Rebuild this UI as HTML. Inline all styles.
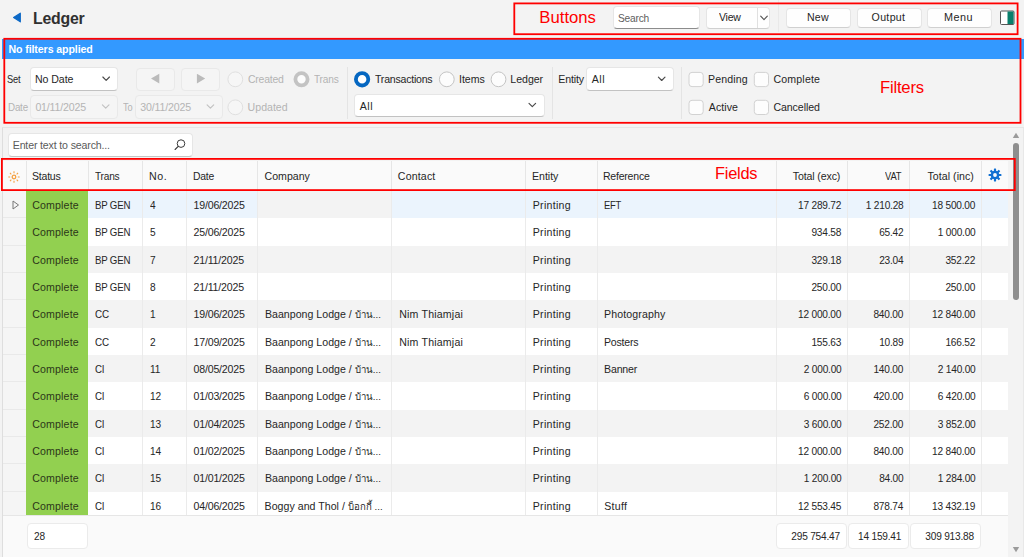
<!DOCTYPE html>
<html><head><meta charset="utf-8"><title>Ledger</title>
<style>
*{box-sizing:border-box}
html,body{margin:0;padding:0}
body{width:1024px;height:557px;background:#f3f3f3;position:relative;overflow:hidden;font-family:"Liberation Sans","Noto Sans CJK SC",sans-serif;font-size:10.6px;color:#262626}
.abs{position:absolute}
.t{position:absolute;white-space:nowrap;line-height:16px;height:16px}
.dis{color:#b4b4b4}
.box{position:absolute;background:#fff;border:1px solid #e6e6e6;border-bottom-color:#c2c2c2;border-radius:4px}
.inp{border-bottom-color:#8c8c8c}
.box.off{background:#f5f5f5;border-color:#e9e9e9}
.btn{position:absolute;background:#fefefe;border:1px solid #e5e5e5;border-bottom-color:#d0d0d0;border-radius:4px;text-align:center;line-height:20px}
.radio{position:absolute;width:16px;height:16px;border-radius:50%;background:#fafafa;border:1px solid #c9c9c9}
.radio.off{background:#f5f5f5;border-color:#e2e2e2}
.chk{position:absolute;width:16px;height:16px;border-radius:3.5px;background:#fdfdfd;border:1px solid #d4d4d4}
.vsep{position:absolute;width:1px;background:#e4e4e4}
#grid{position:absolute;left:2px;top:127px;width:1022px;height:431px;border-top:1px solid #e6e6e6;border-left:1px solid #dedede;border-right:1px solid #e8e8e8}
#gi{position:absolute;left:0;top:0;width:1020px;height:430px;overflow:hidden}
.hrow{position:absolute;left:0;top:33px;width:1005px;height:30px;background:#fafafa}
.h{position:absolute;top:0;height:30px;line-height:30.6px;padding:0 6.3px;border-left:1px solid #e6e6e6;white-space:nowrap}
.h.exc,.h.vat,.h.inc{text-align:right;padding-right:6.6px}
.h.ind{border-left:none}
.row{position:absolute;left:0;width:1005px;height:27.33px;background:#fff}
.row.alt{background:#f3f3f3}
.row.foc{background:#ebf4fd}
.c{position:absolute;top:0;height:27.33px;line-height:29.4px;padding:0 6.5px;border-left:1px solid #ebebeb;white-space:nowrap;overflow:hidden}
.c.ind{background:#f5f5f5;border-left:none;border-bottom:1px solid #e9e9e9}
.c.status{background:#92d050;color:#2c3619;border-left:none}
.c.trans{border-left:none}
.c.exc,.c.vat,.c.inc{text-align:right;padding-right:5.6px}
.c.fc{background:#f3f3f3}
.th{font-size:9.6px}
.foot{position:absolute;left:0;top:387px;width:1005px;height:43px;background:#fafafa;border-top:1px solid #e6e6e6}
.fb{position:absolute;top:7px;height:26px;background:#fff;border:1px solid #ebebeb;border-radius:4px;line-height:24px;padding:0 5.6px;white-space:nowrap}
.fb.r{text-align:right;padding-right:6.5px}
</style></head>
<body>
<!-- header -->
<svg class="abs" style="left:12.4px;top:10.5px" width="10" height="13" viewBox="0 0 10 13"><path d="M8.3 2.2 L1.6 6.4 L8.3 10.8 Z" fill="#0d69c6" stroke="#0d69c6" stroke-width="1.2" stroke-linejoin="round"/></svg>
<div class="t" id="m0" style="left:33.35px;top:8.99px;letter-spacing:-0.220px;line-height:20px;height:20px;transform:scaleX(1.0156);transform-origin:0 50%;font-size:15.6px;font-weight:bold;color:#303030">Ledger</div>

<div class="box inp" style="left:613px;top:6px;width:87px;height:23px"></div>
<div class="t" id="m1" style="left:618.04px;top:10.13px;letter-spacing:-0.220px;line-height:16px;height:16px;transform:scaleX(0.9622);transform-origin:0 50%;color:#5e5e5e">Search</div>
<div class="btn" style="left:706px;top:7px;width:64px;height:22px"></div>
<div class="t" id="m2" style="left:718.63px;top:9.03px;letter-spacing:-0.220px;line-height:16px;height:16px;transform:scaleX(0.9936);transform-origin:0 50%">View</div>
<div class="vsep" style="left:757px;top:8px;height:20px;background:#e0e0e0"></div>
<div class="vsep" style="left:778px;top:0px;height:32px;background:#e9e9e9"></div>
<div class="btn" style="left:786px;top:8px;width:65px;height:20px"></div><div class="t" id="m3" style="left:807.01px;top:9.13px;letter-spacing:0.207px;line-height:16px;height:16px">New</div>
<div class="btn" style="left:857px;top:8px;width:65px;height:20px"></div><div class="t" id="m4" style="left:871.57px;top:9.13px;letter-spacing:0.335px;line-height:16px;height:16px">Output</div>
<div class="btn" style="left:927px;top:8px;width:65px;height:20px"></div><div class="t" id="m5" style="left:944.49px;top:9.13px;letter-spacing:0.500px;line-height:16px;height:16px;transform:scaleX(1.0216);transform-origin:0 50%">Menu</div>
<svg class="abs" style="left:999px;top:10px" width="17" height="16" viewBox="0 0 17 16"><rect x="1.5" y="1" width="13.5" height="13.5" rx="1" fill="#fff" stroke="#555" stroke-width="1"/><rect x="8.5" y="1.5" width="6" height="12.5" fill="#087f6c"/></svg>

<!-- filter bar -->
<div class="abs" style="left:2px;top:39px;width:1022px;height:20px;background:#3399ff"></div>
<div class="t" id="m6" style="left:8.44px;top:40.93px;letter-spacing:-0.091px;line-height:16px;height:16px;font-weight:bold;color:#fff">No filters applied</div>

<div class="t" id="m7" style="left:7.39px;top:71.33px;letter-spacing:-0.220px;line-height:16px;height:16px;transform:scaleX(0.8778);transform-origin:0 50%">Set</div>
<div class="box" style="left:30px;top:67px;width:88px;height:24px"></div>
<div class="t" id="m8" style="left:34.97px;top:71.33px;letter-spacing:-0.066px;line-height:16px;height:16px">No Date</div>

<div class="box off" style="left:136px;top:68px;width:39px;height:23px"></div>

<div class="box off" style="left:181px;top:68px;width:39px;height:23px"></div>


<div class="t dis" id="m9" style="left:247.53px;top:71.33px;letter-spacing:-0.220px;line-height:16px;height:16px;transform:scaleX(0.9878);transform-origin:0 50%">Created</div>
<div class="t dis" id="m10" style="left:314.29px;top:71.33px;letter-spacing:-0.220px;line-height:16px;height:16px;transform:scaleX(0.9573);transform-origin:0 50%">Trans</div>
<div class="t dis" id="m11" style="left:247.61px;top:99.33px;letter-spacing:-0.002px;line-height:16px;height:16px">Updated</div>

<div class="t dis" id="m12" style="left:7.62px;top:99.33px;letter-spacing:-0.220px;line-height:16px;height:16px;transform:scaleX(0.9253);transform-origin:0 50%">Date</div>
<div class="box off" style="left:30px;top:95px;width:88px;height:24px"></div>
<div class="t dis" id="m13" style="left:35.42px;top:99.33px;letter-spacing:-0.180px;line-height:16px;height:16px">01/11/2025</div>
<div class="t dis" id="m14" style="left:122.69px;top:99.33px;letter-spacing:-0.220px;line-height:16px;height:16px;transform:scaleX(0.8665);transform-origin:0 50%">To</div>
<div class="box off" style="left:135px;top:95px;width:88px;height:24px"></div>
<div class="t dis" id="m15" style="left:140.16px;top:99.33px;letter-spacing:-0.133px;line-height:16px;height:16px">30/11/2025</div>

<div class="vsep" style="left:347px;top:67px;height:52px"></div>
<div class="t" id="m16" style="left:374.85px;top:71.33px;letter-spacing:-0.220px;line-height:16px;height:16px;transform:scaleX(0.9959);transform-origin:0 50%">Transactions</div>
<div class="t" id="m17" style="left:459.02px;top:71.33px;letter-spacing:-0.050px;line-height:16px;height:16px">Items</div>
<div class="t" id="m18" style="left:510.36px;top:71.33px;letter-spacing:-0.045px;line-height:16px;height:16px">Ledger</div>
<div class="box" style="left:354px;top:94px;width:191px;height:23px"></div>
<div class="t" id="m19" style="left:359.81px;top:97.93px;letter-spacing:0.500px;line-height:16px;height:16px">All</div>

<div class="vsep" style="left:552px;top:67px;height:52px"></div>
<div class="t" id="m20" style="left:558.33px;top:71.33px;letter-spacing:-0.156px;line-height:16px;height:16px">Entity</div>
<div class="box" style="left:586px;top:67px;width:88px;height:24px"></div>
<div class="t" id="m21" style="left:591.80px;top:71.33px;letter-spacing:0.500px;line-height:16px;height:16px">All</div>

<div class="vsep" style="left:681px;top:67px;height:52px"></div>
<div class="t" id="m22" style="left:708.09px;top:71.33px;letter-spacing:0.110px;line-height:16px;height:16px">Pending</div>
<div class="t" id="m23" style="left:773.40px;top:71.33px;letter-spacing:0.179px;line-height:16px;height:16px">Complete</div>
<div class="t" id="m24" style="left:708.80px;top:99.33px;letter-spacing:0.064px;line-height:16px;height:16px">Active</div>
<div class="t" id="m25" style="left:773.38px;top:99.33px;letter-spacing:-0.062px;line-height:16px;height:16px">Cancelled</div>

<svg class="abs" style="left:0;top:0" width="1024" height="557" viewBox="0 0 1024 557">
<g fill="none" stroke-linecap="round" stroke-linejoin="round">
<path d="M760.70 16.20 L764.00 19.60 L767.30 16.20" stroke="#555" stroke-width="1.15"/>
<path d="M102.85 77.00 L106.15 80.40 L109.45 77.00" stroke="#4a4a4a" stroke-width="1.15"/>
<path d="M658.40 77.10 L661.70 80.50 L665.00 77.10" stroke="#4a4a4a" stroke-width="1.15"/>
<path d="M529.00 103.30 L532.30 106.70 L535.60 103.30" stroke="#4a4a4a" stroke-width="1.15"/>
<path d="M102.40 104.80 L105.70 108.20 L109.00 104.80" stroke="#c2c2c2" stroke-width="1.15"/>
<path d="M207.10 104.80 L210.40 108.20 L213.70 104.80" stroke="#c2c2c2" stroke-width="1.15"/>
</g>
<g>
<circle cx="235.3" cy="79.3" r="7.4" fill="#f6f6f6" stroke="#e0e0e0" stroke-width="1"/>
<circle cx="235.3" cy="107.3" r="7.4" fill="#f6f6f6" stroke="#e0e0e0" stroke-width="1"/>
<circle cx="301.5" cy="79.3" r="6.1" fill="#fcfcfc" stroke="#c3c3c3" stroke-width="3.8"/>
<circle cx="362.1" cy="79.3" r="6.2" fill="#ffffff" stroke="#0567c1" stroke-width="3.8"/>
<circle cx="446.8" cy="79.3" r="7.4" fill="#fcfcfc" stroke="#c4c4c4" stroke-width="1"/>
<circle cx="498.5" cy="79.3" r="7.4" fill="#fcfcfc" stroke="#c4c4c4" stroke-width="1"/>
</g>
<path d="M159.3 73.8 L151 78.6 L159.3 83.4 Z M196.9 73.8 L205.2 78.6 L196.9 83.4 Z" fill="#bbbbbb"/>
<g fill="#fdfdfd" stroke="#d2d2d2" stroke-width="1">
<rect x="689" y="72.4" width="14.2" height="14.2" rx="3"/>
<rect x="754.3" y="72.4" width="14.2" height="14.2" rx="3"/>
<rect x="689" y="100.3" width="14.2" height="14.2" rx="3"/>
<rect x="754.3" y="100.3" width="14.2" height="14.2" rx="3"/>
</g>
</svg>
<!-- grid -->
<div id="grid"><div id="gi">
  <div class="box inp" style="left:5px;top:5px;width:185px;height:24px;border-bottom-color:#c4c4c4"></div>
  <div class="t" id="m26" style="left:9.73px;top:8.93px;letter-spacing:-0.152px;line-height:16px;height:16px;color:#5a5a5a">Enter text to search...</div>
  <svg class="abs" style="left:170.4px;top:10px" width="14" height="14" viewBox="0 0 14 14"><circle cx="8" cy="5.6" r="3.8" fill="none" stroke="#3a3a3a" stroke-width="1"/><path d="M5.2 8.4 L2.1 11.5" stroke="#3a3a3a" stroke-width="1.1" stroke-linecap="round"/></svg>
  <div class="hrow"><div class="h ind" style="left:0px;width:23px"><svg width="14" height="14" viewBox="0 0 14 14" style="position:absolute;left:4.4px;top:8.7px"><g stroke="#f4a040" fill="none" stroke-linecap="butt"><circle cx="7" cy="7" r="1.8" stroke-width="1.3"/><path stroke-width="1.1" d="M7 1.3v1.9M7 10.8v1.9M1.3 7h1.9M10.8 7h1.9M2.97 2.97l1.35 1.35M9.68 9.68l1.35 1.35M2.97 11.03l1.35-1.35M9.68 4.32l1.35-1.35"/></g></svg></div><div class="h status" style="left:23px;width:62px"><span id="c111" style="letter-spacing:-0.220px;position:relative;left:-1.17px;display:inline-block;transform:scaleX(0.9938);transform-origin:0 50%">Status</span></div><div class="h trans" style="left:85px;width:54px"><span id="c112" style="letter-spacing:-0.220px;position:relative;left:-0.10px;display:inline-block;transform:scaleX(0.9550);transform-origin:0 50%">Trans</span></div><div class="h no" style="left:139px;width:44px"><span id="c113" style="letter-spacing:0.500px;position:relative;left:-0.76px;display:inline-block;transform:scaleX(1.0066);transform-origin:0 50%">No.</span></div><div class="h date" style="left:183px;width:71px"><span id="c114" style="letter-spacing:-0.220px;position:relative;left:-0.52px;display:inline-block;transform:scaleX(0.9794);transform-origin:0 50%">Date</span></div><div class="h company" style="left:254px;width:134px"><span id="c115" style="letter-spacing:0.006px;position:relative;left:0.22px">Company</span></div><div class="h contact" style="left:388px;width:134px"><span id="c116" style="letter-spacing:0.157px;position:relative;left:-0.44px">Contact</span></div><div class="h entity" style="left:522px;width:72px"><span id="c117" style="letter-spacing:-0.018px;position:relative;left:-0.30px">Entity</span></div><div class="h ref" style="left:594px;width:179px"><span id="c118" style="letter-spacing:-0.220px;position:relative;left:-0.88px;display:inline-block;transform:scaleX(0.9925);transform-origin:0 50%">Reference</span></div><div class="h exc" style="left:773px;width:71px"><span id="c119" style="letter-spacing:-0.137px;position:relative;left:-0.21px">Total (exc)</span></div><div class="h vat" style="left:844px;width:62px"><span id="c120" style="letter-spacing:-0.220px;position:relative;left:-0.61px;display:inline-block;transform:scaleX(0.8849);transform-origin:100% 50%">VAT</span></div><div class="h inc" style="left:906px;width:72px"><span id="c121" style="letter-spacing:0.051px;position:relative;left:-0.50px">Total (inc)</span></div><div class="h gear" style="left:978px;width:27px"><svg width="14" height="14" viewBox="0 0 14 14" style="position:absolute;left:5.8px;top:7.4px"><g fill="#1170d2"><circle cx="7" cy="7" r="4.3"/><g><rect x="5.9" y="0.6" width="2.2" height="12.8" rx="0.4"/><rect x="5.9" y="0.6" width="2.2" height="12.8" rx="0.4" transform="rotate(45 7 7)"/><rect x="5.9" y="0.6" width="2.2" height="12.8" rx="0.4" transform="rotate(90 7 7)"/><rect x="5.9" y="0.6" width="2.2" height="12.8" rx="0.4" transform="rotate(135 7 7)"/></g></g><circle cx="7" cy="7" r="1.9" fill="#fafafa"/></svg></div></div>
<div class="row foc" style="top:63.00px"><div class="c ind" style="left:0px;width:23px"><svg width="8" height="10" viewBox="0 0 8 10" style="position:absolute;left:9px;top:8.5px"><path d="M1 1 L6.5 5 L1 9 Z" fill="none" stroke="#777" stroke-width="1"/></svg></div><div class="c status" style="left:23px;width:62px"><span id="c1" style="letter-spacing:0.156px;position:relative;left:-0.30px">Complete</span></div><div class="c trans" style="left:85px;width:54px"><span id="c2" style="letter-spacing:-0.220px;position:relative;left:0.99px;display:inline-block;transform:scaleX(0.9130);transform-origin:0 50%">BP GEN</span></div><div class="c no" style="left:139px;width:44px"><span id="c3" style="letter-spacing:-0.220px;display:inline-block;transform:scaleX(0.9537);transform-origin:0 50%">4</span></div><div class="c date" style="left:183px;width:71px"><span id="c4" style="letter-spacing:-0.183px">19/06/2025</span></div><div class="c company fc" style="left:254px;width:134px"></div><div class="c contact" style="left:388px;width:134px"></div><div class="c entity" style="left:522px;width:72px"><span id="c5" style="letter-spacing:0.285px;position:relative;left:0.22px">Printing</span></div><div class="c ref" style="left:594px;width:179px"><span id="c6" style="letter-spacing:-0.220px;position:relative;left:-0.54px;display:inline-block;transform:scaleX(0.8873);transform-origin:0 50%">EFT</span></div><div class="c exc" style="left:773px;width:71px"><span id="c7" style="letter-spacing:-0.220px;display:inline-block;transform:scaleX(0.9537);transform-origin:100% 50%">17 289.72</span></div><div class="c vat" style="left:844px;width:62px"><span id="c8" style="letter-spacing:-0.220px;display:inline-block;transform:scaleX(0.9537);transform-origin:100% 50%">1 210.28</span></div><div class="c inc" style="left:906px;width:72px"><span id="c9" style="letter-spacing:-0.220px;display:inline-block;transform:scaleX(0.9537);transform-origin:100% 50%">18 500.00</span></div><div class="c gear" style="left:978px;width:27px"></div></div>
<div class="row" style="top:90.33px"><div class="c ind" style="left:0px;width:23px"></div><div class="c status" style="left:23px;width:62px"><span id="c10" style="letter-spacing:0.156px;position:relative;left:-0.30px">Complete</span></div><div class="c trans" style="left:85px;width:54px"><span id="c11" style="letter-spacing:-0.220px;position:relative;left:0.99px;display:inline-block;transform:scaleX(0.9130);transform-origin:0 50%">BP GEN</span></div><div class="c no" style="left:139px;width:44px"><span id="c12" style="letter-spacing:-0.220px;display:inline-block;transform:scaleX(0.9537);transform-origin:0 50%">5</span></div><div class="c date" style="left:183px;width:71px"><span id="c13" style="letter-spacing:-0.183px">25/06/2025</span></div><div class="c company" style="left:254px;width:134px"></div><div class="c contact" style="left:388px;width:134px"></div><div class="c entity" style="left:522px;width:72px"><span id="c14" style="letter-spacing:0.285px;position:relative;left:0.22px">Printing</span></div><div class="c ref" style="left:594px;width:179px"></div><div class="c exc" style="left:773px;width:71px"><span id="c15" style="letter-spacing:-0.220px;display:inline-block;transform:scaleX(0.9537);transform-origin:100% 50%">934.58</span></div><div class="c vat" style="left:844px;width:62px"><span id="c16" style="letter-spacing:-0.220px;display:inline-block;transform:scaleX(0.9537);transform-origin:100% 50%">65.42</span></div><div class="c inc" style="left:906px;width:72px"><span id="c17" style="letter-spacing:-0.220px;display:inline-block;transform:scaleX(0.9537);transform-origin:100% 50%">1 000.00</span></div><div class="c gear" style="left:978px;width:27px"></div></div>
<div class="row alt" style="top:117.66px"><div class="c ind" style="left:0px;width:23px"></div><div class="c status" style="left:23px;width:62px"><span id="c18" style="letter-spacing:0.156px;position:relative;left:-0.30px">Complete</span></div><div class="c trans" style="left:85px;width:54px"><span id="c19" style="letter-spacing:-0.220px;position:relative;left:0.99px;display:inline-block;transform:scaleX(0.9130);transform-origin:0 50%">BP GEN</span></div><div class="c no" style="left:139px;width:44px"><span id="c20" style="letter-spacing:-0.220px;display:inline-block;transform:scaleX(0.9537);transform-origin:0 50%">7</span></div><div class="c date" style="left:183px;width:71px"><span id="c21" style="letter-spacing:-0.183px">21/11/2025</span></div><div class="c company" style="left:254px;width:134px"></div><div class="c contact" style="left:388px;width:134px"></div><div class="c entity" style="left:522px;width:72px"><span id="c22" style="letter-spacing:0.285px;position:relative;left:0.22px">Printing</span></div><div class="c ref" style="left:594px;width:179px"></div><div class="c exc" style="left:773px;width:71px"><span id="c23" style="letter-spacing:-0.220px;display:inline-block;transform:scaleX(0.9537);transform-origin:100% 50%">329.18</span></div><div class="c vat" style="left:844px;width:62px"><span id="c24" style="letter-spacing:-0.220px;display:inline-block;transform:scaleX(0.9537);transform-origin:100% 50%">23.04</span></div><div class="c inc" style="left:906px;width:72px"><span id="c25" style="letter-spacing:-0.220px;display:inline-block;transform:scaleX(0.9537);transform-origin:100% 50%">352.22</span></div><div class="c gear" style="left:978px;width:27px"></div></div>
<div class="row" style="top:144.99px"><div class="c ind" style="left:0px;width:23px"></div><div class="c status" style="left:23px;width:62px"><span id="c26" style="letter-spacing:0.156px;position:relative;left:-0.30px">Complete</span></div><div class="c trans" style="left:85px;width:54px"><span id="c27" style="letter-spacing:-0.220px;position:relative;left:0.99px;display:inline-block;transform:scaleX(0.9130);transform-origin:0 50%">BP GEN</span></div><div class="c no" style="left:139px;width:44px"><span id="c28" style="letter-spacing:-0.220px;display:inline-block;transform:scaleX(0.9537);transform-origin:0 50%">8</span></div><div class="c date" style="left:183px;width:71px"><span id="c29" style="letter-spacing:-0.183px">21/11/2025</span></div><div class="c company" style="left:254px;width:134px"></div><div class="c contact" style="left:388px;width:134px"></div><div class="c entity" style="left:522px;width:72px"><span id="c30" style="letter-spacing:0.285px;position:relative;left:0.22px">Printing</span></div><div class="c ref" style="left:594px;width:179px"></div><div class="c exc" style="left:773px;width:71px"><span id="c31" style="letter-spacing:-0.220px;display:inline-block;transform:scaleX(0.9537);transform-origin:100% 50%">250.00</span></div><div class="c vat" style="left:844px;width:62px"></div><div class="c inc" style="left:906px;width:72px"><span id="c32" style="letter-spacing:-0.220px;display:inline-block;transform:scaleX(0.9537);transform-origin:100% 50%">250.00</span></div><div class="c gear" style="left:978px;width:27px"></div></div>
<div class="row alt" style="top:172.32px"><div class="c ind" style="left:0px;width:23px"></div><div class="c status" style="left:23px;width:62px"><span id="c33" style="letter-spacing:0.156px;position:relative;left:-0.30px">Complete</span></div><div class="c trans" style="left:85px;width:54px"><span id="c34" style="letter-spacing:-0.220px;position:relative;left:0.68px;display:inline-block;transform:scaleX(0.9298);transform-origin:0 50%">CC</span></div><div class="c no" style="left:139px;width:44px"><span id="c35" style="letter-spacing:-0.220px;display:inline-block;transform:scaleX(0.9537);transform-origin:0 50%">1</span></div><div class="c date" style="left:183px;width:71px"><span id="c36" style="letter-spacing:-0.183px">19/06/2025</span></div><div class="c company" style="left:254px;width:134px"><span id="c37" style="letter-spacing:0.021px;position:relative;left:0.42px">Baanpong Lodge / </span><span class="th" style="position:relative;left:0.42px">บ้าน...</span></div><div class="c contact" style="left:388px;width:134px"><span id="c38" style="letter-spacing:0.185px;position:relative;left:0.69px">Nim Thiamjai</span></div><div class="c entity" style="left:522px;width:72px"><span id="c39" style="letter-spacing:0.285px;position:relative;left:0.22px">Printing</span></div><div class="c ref" style="left:594px;width:179px"><span id="c40" style="letter-spacing:0.107px;position:relative;left:-0.40px">Photography</span></div><div class="c exc" style="left:773px;width:71px"><span id="c41" style="letter-spacing:-0.220px;display:inline-block;transform:scaleX(0.9537);transform-origin:100% 50%">12 000.00</span></div><div class="c vat" style="left:844px;width:62px"><span id="c42" style="letter-spacing:-0.220px;display:inline-block;transform:scaleX(0.9537);transform-origin:100% 50%">840.00</span></div><div class="c inc" style="left:906px;width:72px"><span id="c43" style="letter-spacing:-0.220px;display:inline-block;transform:scaleX(0.9537);transform-origin:100% 50%">12 840.00</span></div><div class="c gear" style="left:978px;width:27px"></div></div>
<div class="row" style="top:199.65px"><div class="c ind" style="left:0px;width:23px"></div><div class="c status" style="left:23px;width:62px"><span id="c44" style="letter-spacing:0.156px;position:relative;left:-0.30px">Complete</span></div><div class="c trans" style="left:85px;width:54px"><span id="c45" style="letter-spacing:-0.220px;position:relative;left:0.68px;display:inline-block;transform:scaleX(0.9298);transform-origin:0 50%">CC</span></div><div class="c no" style="left:139px;width:44px"><span id="c46" style="letter-spacing:-0.220px;display:inline-block;transform:scaleX(0.9537);transform-origin:0 50%">2</span></div><div class="c date" style="left:183px;width:71px"><span id="c47" style="letter-spacing:-0.183px">17/09/2025</span></div><div class="c company" style="left:254px;width:134px"><span id="c48" style="letter-spacing:0.021px;position:relative;left:0.42px">Baanpong Lodge / </span><span class="th" style="position:relative;left:0.42px">บ้าน...</span></div><div class="c contact" style="left:388px;width:134px"><span id="c49" style="letter-spacing:0.185px;position:relative;left:0.69px">Nim Thiamjai</span></div><div class="c entity" style="left:522px;width:72px"><span id="c50" style="letter-spacing:0.285px;position:relative;left:0.22px">Printing</span></div><div class="c ref" style="left:594px;width:179px"><span id="c51" style="letter-spacing:-0.220px;position:relative;left:-0.60px;display:inline-block;transform:scaleX(0.9970);transform-origin:0 50%">Posters</span></div><div class="c exc" style="left:773px;width:71px"><span id="c52" style="letter-spacing:-0.220px;display:inline-block;transform:scaleX(0.9537);transform-origin:100% 50%">155.63</span></div><div class="c vat" style="left:844px;width:62px"><span id="c53" style="letter-spacing:-0.220px;display:inline-block;transform:scaleX(0.9537);transform-origin:100% 50%">10.89</span></div><div class="c inc" style="left:906px;width:72px"><span id="c54" style="letter-spacing:-0.220px;display:inline-block;transform:scaleX(0.9537);transform-origin:100% 50%">166.52</span></div><div class="c gear" style="left:978px;width:27px"></div></div>
<div class="row alt" style="top:226.98px"><div class="c ind" style="left:0px;width:23px"></div><div class="c status" style="left:23px;width:62px"><span id="c55" style="letter-spacing:0.156px;position:relative;left:-0.30px">Complete</span></div><div class="c trans" style="left:85px;width:54px"><span id="c56" style="letter-spacing:-0.220px;position:relative;left:0.52px;display:inline-block;transform:scaleX(0.9201);transform-origin:0 50%">CI</span></div><div class="c no" style="left:139px;width:44px"><span id="c57" style="letter-spacing:-0.220px;display:inline-block;transform:scaleX(0.9537);transform-origin:0 50%">11</span></div><div class="c date" style="left:183px;width:71px"><span id="c58" style="letter-spacing:-0.183px">08/05/2025</span></div><div class="c company" style="left:254px;width:134px"><span id="c59" style="letter-spacing:0.021px;position:relative;left:0.42px">Baanpong Lodge / </span><span class="th" style="position:relative;left:0.42px">บ้าน...</span></div><div class="c contact" style="left:388px;width:134px"></div><div class="c entity" style="left:522px;width:72px"><span id="c60" style="letter-spacing:0.285px;position:relative;left:0.22px">Printing</span></div><div class="c ref" style="left:594px;width:179px"><span id="c61" style="letter-spacing:-0.213px;position:relative;left:-0.40px">Banner</span></div><div class="c exc" style="left:773px;width:71px"><span id="c62" style="letter-spacing:-0.220px;display:inline-block;transform:scaleX(0.9537);transform-origin:100% 50%">2 000.00</span></div><div class="c vat" style="left:844px;width:62px"><span id="c63" style="letter-spacing:-0.220px;display:inline-block;transform:scaleX(0.9537);transform-origin:100% 50%">140.00</span></div><div class="c inc" style="left:906px;width:72px"><span id="c64" style="letter-spacing:-0.220px;display:inline-block;transform:scaleX(0.9537);transform-origin:100% 50%">2 140.00</span></div><div class="c gear" style="left:978px;width:27px"></div></div>
<div class="row" style="top:254.31px"><div class="c ind" style="left:0px;width:23px"></div><div class="c status" style="left:23px;width:62px"><span id="c65" style="letter-spacing:0.156px;position:relative;left:-0.30px">Complete</span></div><div class="c trans" style="left:85px;width:54px"><span id="c66" style="letter-spacing:-0.220px;position:relative;left:0.52px;display:inline-block;transform:scaleX(0.9201);transform-origin:0 50%">CI</span></div><div class="c no" style="left:139px;width:44px"><span id="c67" style="letter-spacing:-0.220px;display:inline-block;transform:scaleX(0.9537);transform-origin:0 50%">12</span></div><div class="c date" style="left:183px;width:71px"><span id="c68" style="letter-spacing:-0.183px">01/03/2025</span></div><div class="c company" style="left:254px;width:134px"><span id="c69" style="letter-spacing:0.021px;position:relative;left:0.42px">Baanpong Lodge / </span><span class="th" style="position:relative;left:0.42px">บ้าน...</span></div><div class="c contact" style="left:388px;width:134px"></div><div class="c entity" style="left:522px;width:72px"><span id="c70" style="letter-spacing:0.285px;position:relative;left:0.22px">Printing</span></div><div class="c ref" style="left:594px;width:179px"></div><div class="c exc" style="left:773px;width:71px"><span id="c71" style="letter-spacing:-0.220px;display:inline-block;transform:scaleX(0.9537);transform-origin:100% 50%">6 000.00</span></div><div class="c vat" style="left:844px;width:62px"><span id="c72" style="letter-spacing:-0.220px;display:inline-block;transform:scaleX(0.9537);transform-origin:100% 50%">420.00</span></div><div class="c inc" style="left:906px;width:72px"><span id="c73" style="letter-spacing:-0.220px;display:inline-block;transform:scaleX(0.9537);transform-origin:100% 50%">6 420.00</span></div><div class="c gear" style="left:978px;width:27px"></div></div>
<div class="row alt" style="top:281.64px"><div class="c ind" style="left:0px;width:23px"></div><div class="c status" style="left:23px;width:62px"><span id="c74" style="letter-spacing:0.156px;position:relative;left:-0.30px">Complete</span></div><div class="c trans" style="left:85px;width:54px"><span id="c75" style="letter-spacing:-0.220px;position:relative;left:0.52px;display:inline-block;transform:scaleX(0.9201);transform-origin:0 50%">CI</span></div><div class="c no" style="left:139px;width:44px"><span id="c76" style="letter-spacing:-0.220px;display:inline-block;transform:scaleX(0.9537);transform-origin:0 50%">13</span></div><div class="c date" style="left:183px;width:71px"><span id="c77" style="letter-spacing:-0.183px">01/04/2025</span></div><div class="c company" style="left:254px;width:134px"><span id="c78" style="letter-spacing:0.021px;position:relative;left:0.42px">Baanpong Lodge / </span><span class="th" style="position:relative;left:0.42px">บ้าน...</span></div><div class="c contact" style="left:388px;width:134px"></div><div class="c entity" style="left:522px;width:72px"><span id="c79" style="letter-spacing:0.285px;position:relative;left:0.22px">Printing</span></div><div class="c ref" style="left:594px;width:179px"></div><div class="c exc" style="left:773px;width:71px"><span id="c80" style="letter-spacing:-0.220px;display:inline-block;transform:scaleX(0.9537);transform-origin:100% 50%">3 600.00</span></div><div class="c vat" style="left:844px;width:62px"><span id="c81" style="letter-spacing:-0.220px;display:inline-block;transform:scaleX(0.9537);transform-origin:100% 50%">252.00</span></div><div class="c inc" style="left:906px;width:72px"><span id="c82" style="letter-spacing:-0.220px;display:inline-block;transform:scaleX(0.9537);transform-origin:100% 50%">3 852.00</span></div><div class="c gear" style="left:978px;width:27px"></div></div>
<div class="row" style="top:308.97px"><div class="c ind" style="left:0px;width:23px"></div><div class="c status" style="left:23px;width:62px"><span id="c83" style="letter-spacing:0.156px;position:relative;left:-0.30px">Complete</span></div><div class="c trans" style="left:85px;width:54px"><span id="c84" style="letter-spacing:-0.220px;position:relative;left:0.52px;display:inline-block;transform:scaleX(0.9201);transform-origin:0 50%">CI</span></div><div class="c no" style="left:139px;width:44px"><span id="c85" style="letter-spacing:-0.220px;display:inline-block;transform:scaleX(0.9537);transform-origin:0 50%">14</span></div><div class="c date" style="left:183px;width:71px"><span id="c86" style="letter-spacing:-0.183px">01/02/2025</span></div><div class="c company" style="left:254px;width:134px"><span id="c87" style="letter-spacing:0.021px;position:relative;left:0.42px">Baanpong Lodge / </span><span class="th" style="position:relative;left:0.42px">บ้าน...</span></div><div class="c contact" style="left:388px;width:134px"></div><div class="c entity" style="left:522px;width:72px"><span id="c88" style="letter-spacing:0.285px;position:relative;left:0.22px">Printing</span></div><div class="c ref" style="left:594px;width:179px"></div><div class="c exc" style="left:773px;width:71px"><span id="c89" style="letter-spacing:-0.220px;display:inline-block;transform:scaleX(0.9537);transform-origin:100% 50%">12 000.00</span></div><div class="c vat" style="left:844px;width:62px"><span id="c90" style="letter-spacing:-0.220px;display:inline-block;transform:scaleX(0.9537);transform-origin:100% 50%">840.00</span></div><div class="c inc" style="left:906px;width:72px"><span id="c91" style="letter-spacing:-0.220px;display:inline-block;transform:scaleX(0.9537);transform-origin:100% 50%">12 840.00</span></div><div class="c gear" style="left:978px;width:27px"></div></div>
<div class="row alt" style="top:336.30px"><div class="c ind" style="left:0px;width:23px"></div><div class="c status" style="left:23px;width:62px"><span id="c92" style="letter-spacing:0.156px;position:relative;left:-0.30px">Complete</span></div><div class="c trans" style="left:85px;width:54px"><span id="c93" style="letter-spacing:-0.220px;position:relative;left:0.52px;display:inline-block;transform:scaleX(0.9201);transform-origin:0 50%">CI</span></div><div class="c no" style="left:139px;width:44px"><span id="c94" style="letter-spacing:-0.220px;display:inline-block;transform:scaleX(0.9537);transform-origin:0 50%">15</span></div><div class="c date" style="left:183px;width:71px"><span id="c95" style="letter-spacing:-0.183px">01/01/2025</span></div><div class="c company" style="left:254px;width:134px"><span id="c96" style="letter-spacing:0.021px;position:relative;left:0.42px">Baanpong Lodge / </span><span class="th" style="position:relative;left:0.42px">บ้าน...</span></div><div class="c contact" style="left:388px;width:134px"></div><div class="c entity" style="left:522px;width:72px"><span id="c97" style="letter-spacing:0.285px;position:relative;left:0.22px">Printing</span></div><div class="c ref" style="left:594px;width:179px"></div><div class="c exc" style="left:773px;width:71px"><span id="c98" style="letter-spacing:-0.220px;display:inline-block;transform:scaleX(0.9537);transform-origin:100% 50%">1 200.00</span></div><div class="c vat" style="left:844px;width:62px"><span id="c99" style="letter-spacing:-0.220px;display:inline-block;transform:scaleX(0.9537);transform-origin:100% 50%">84.00</span></div><div class="c inc" style="left:906px;width:72px"><span id="c100" style="letter-spacing:-0.220px;display:inline-block;transform:scaleX(0.9537);transform-origin:100% 50%">1 284.00</span></div><div class="c gear" style="left:978px;width:27px"></div></div>
<div class="row" style="top:363.63px"><div class="c ind" style="left:0px;width:23px"></div><div class="c status" style="left:23px;width:62px"><span id="c101" style="letter-spacing:0.156px;position:relative;left:-0.30px">Complete</span></div><div class="c trans" style="left:85px;width:54px"><span id="c102" style="letter-spacing:-0.220px;position:relative;left:0.52px;display:inline-block;transform:scaleX(0.9201);transform-origin:0 50%">CI</span></div><div class="c no" style="left:139px;width:44px"><span id="c103" style="letter-spacing:-0.220px;display:inline-block;transform:scaleX(0.9537);transform-origin:0 50%">16</span></div><div class="c date" style="left:183px;width:71px"><span id="c104" style="letter-spacing:-0.183px">04/06/2025</span></div><div class="c company" style="left:254px;width:134px"><span id="c105" style="letter-spacing:0.031px;position:relative;left:0.06px">Boggy and Thol / </span><span class="th" style="position:relative;left:0.06px">บ็อกกี้ ...</span></div><div class="c contact" style="left:388px;width:134px"></div><div class="c entity" style="left:522px;width:72px"><span id="c106" style="letter-spacing:0.285px;position:relative;left:0.22px">Printing</span></div><div class="c ref" style="left:594px;width:179px"><span id="c107" style="letter-spacing:0.309px;position:relative;left:-0.31px">Stuff</span></div><div class="c exc" style="left:773px;width:71px"><span id="c108" style="letter-spacing:-0.220px;display:inline-block;transform:scaleX(0.9537);transform-origin:100% 50%">12 553.45</span></div><div class="c vat" style="left:844px;width:62px"><span id="c109" style="letter-spacing:-0.220px;display:inline-block;transform:scaleX(0.9537);transform-origin:100% 50%">878.74</span></div><div class="c inc" style="left:906px;width:72px"><span id="c110" style="letter-spacing:-0.220px;display:inline-block;transform:scaleX(0.9537);transform-origin:100% 50%">13 432.19</span></div><div class="c gear" style="left:978px;width:27px"></div></div>
  <div class="foot">
    <div class="fb" style="left:24px;width:61px"><span id="c122" style="letter-spacing:-0.220px;display:inline-block;transform:scaleX(0.9537);transform-origin:0 50%">28</span></div>
    <div class="fb r" style="left:773px;width:71px"><span id="c123" style="letter-spacing:-0.220px;display:inline-block;transform:scaleX(0.9537);transform-origin:100% 50%">295 754.47</span></div>
    <div class="fb r" style="left:845px;width:61px"><span id="c124" style="letter-spacing:-0.220px;display:inline-block;transform:scaleX(0.9537);transform-origin:100% 50%">14 159.41</span></div>
    <div class="fb r" style="left:907px;width:71px"><span id="c125" style="letter-spacing:-0.220px;display:inline-block;transform:scaleX(0.9537);transform-origin:100% 50%">309 913.88</span></div>
  </div>
  <!-- scrollbar -->
  <svg class="abs" style="left:1009px;top:4px" width="8" height="7" viewBox="0 0 8 7"><path d="M4 0.8 L7.2 6 L0.8 6 Z" fill="#9a9a9a"/></svg>
  <div class="abs" style="left:1010px;top:15px;width:6px;height:157px;border-radius:3px;background:#8e8e8e"></div>
  <svg class="abs" style="left:1009px;top:418px" width="8" height="7" viewBox="0 0 8 7"><path d="M0.8 1 L7.2 1 L4 6.2 Z" fill="#9a9a9a"/></svg>
</div></div>

<!-- annotations -->
<svg class="abs" style="left:0;top:0" width="1024" height="557" viewBox="0 0 1024 557">
  <g fill="none" stroke="#ff0000" stroke-width="1.8">
    <rect x="514.3" y="3.4" width="503.3" height="30.8"/>
    <rect x="4.3" y="38.8" width="1016.2" height="84"/>
    <rect x="1.9" y="158.9" width="1012.9" height="31.2"/>
  </g>
</svg>
<div class="t" id="m27" style="left:539.37px;top:5.71px;letter-spacing:-0.003px;line-height:24px;height:24px;font-size:16.7px;color:#ff0000">Buttons</div>
<div class="t" id="m28" style="left:880.02px;top:76.34px;letter-spacing:-0.220px;line-height:24px;height:24px;transform:scaleX(0.9865);transform-origin:0 50%;font-size:16.9px;color:#ff0000">Filters</div>
<div class="t" id="m29" style="left:714.59px;top:161.88px;letter-spacing:-0.220px;line-height:24px;height:24px;transform:scaleX(0.9743);transform-origin:0 50%;font-size:16.8px;color:#ff0000">Fields</div>
</body></html>
